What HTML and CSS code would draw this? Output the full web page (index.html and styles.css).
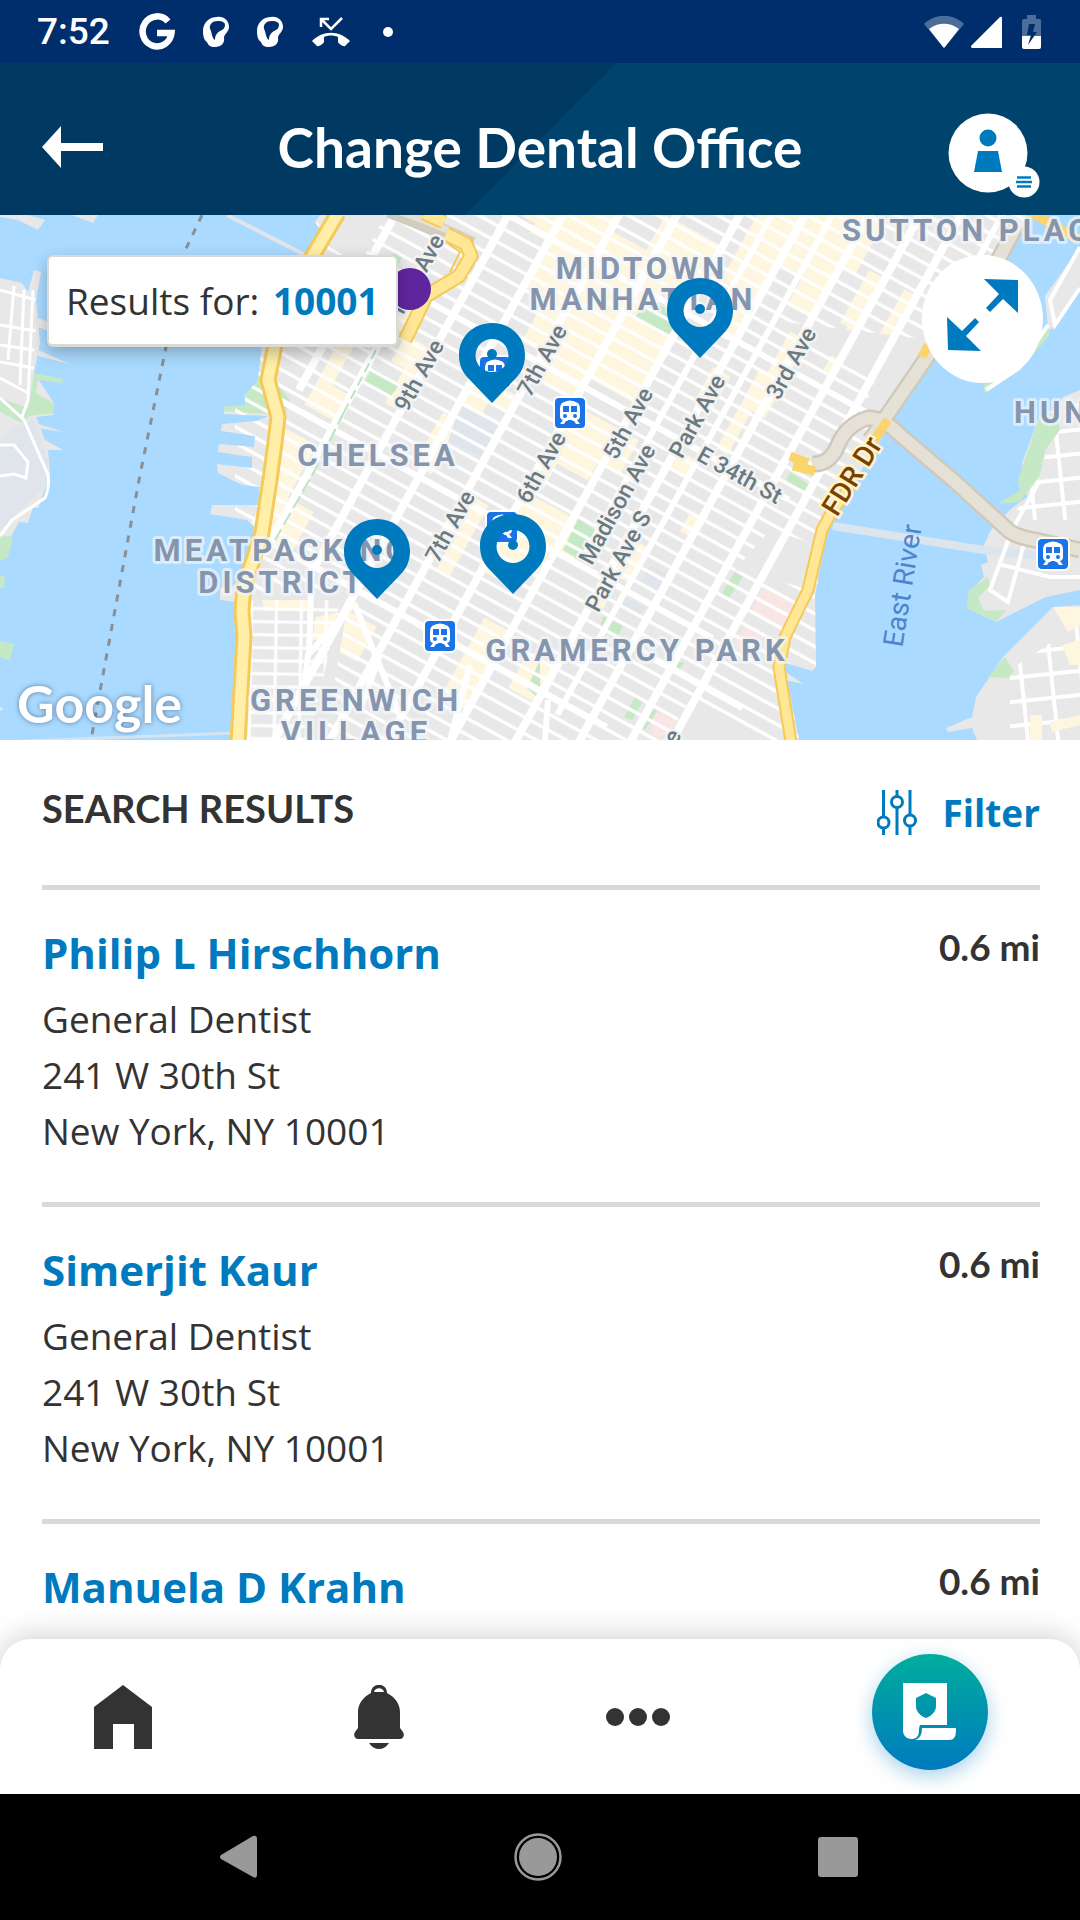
FILE: index.html
```html
<!DOCTYPE html>
<html lang="en">
<head>
<meta charset="utf-8">
<meta name="viewport" content="width=device-width, initial-scale=1">
<title>Change Dental Office</title>
<link rel="stylesheet" href="styles.css">
</head>
<body>
<div class="status">
  <span class="status-time">7:52</span>
  <div class="status-notes">
    <svg width="36" height="38" viewBox="0 0 36 38"><path d="M29 8.500A14.500 15 0 1 0 32.500 20H18" fill="none" stroke="#fff" stroke-width="6.500"/></svg>
    <svg width="26" height="32" viewBox="0 0 26 32"><path fill="#fff" fill-rule="evenodd" d="M14 1C21 0 26 5 26 11C26 16 21 18 21 22C22 27 18 31 12 31C7 31 5 29 4 26C1 24 0 20 0 15C0 7 6 1 14 1ZM8 8C6 10 7 13 8 15C9 18 9 22 12 24C12 19 14 17 17 15C20 14 22 12 22 9C22 6 19 5 15 5C11 5 9 6 8 8Z"/></svg>
    <svg width="26" height="32" viewBox="0 0 26 32"><path fill="#fff" fill-rule="evenodd" d="M14 1C21 0 26 5 26 11C26 16 21 18 21 22C22 27 18 31 12 31C7 31 5 29 4 26C1 24 0 20 0 15C0 7 6 1 14 1ZM8 8C6 10 7 13 8 15C9 18 9 22 12 24C12 19 14 17 17 15C20 14 22 12 22 9C22 6 19 5 15 5C11 5 9 6 8 8Z"/></svg>
    <svg width="40" height="32" viewBox="0 0 40 32"><path d="M10 11V3H18M10 3L20 13L31 2" fill="none" stroke="#fff" stroke-width="2.500"/><path fill="#fff" d="M1 25C12 14 28 14 39 25L34 30C32 31 28 28 27 26V21C23 19 17 19 13 21V26C12 28 8 31 6 30Z"/></svg>
    <svg width="10" height="10" viewBox="0 0 10 10"><circle cx="5" cy="5" r="5" fill="#fff"/></svg>
  </div>
  <div class="status-system">
    <svg width="40" height="34" viewBox="0 0 40 34"><path fill="#4d6d99" d="M0 9C11-2 29-2 40 9L20 33Z"/><path fill="#fff" d="M5 14C14 7 26 7 35 14L21 32Q20 33 19 32Z"/></svg>
    <svg width="32" height="34" viewBox="0 0 32 34"><path fill="#fff" d="M0 31L29 2Q31 1 31 3V33H1Q0 33 0 31Z"/></svg>
    <svg class="battery" width="20" height="34" viewBox="0 0 20 34"><path fill="#4d6d99" d="M5 0H14V4H18Q19 4 19 6V21H0V6Q0 4 2 4H5Z"/><path fill="#fff" d="M0 21H19V32Q19 34 17 34H2Q0 34 0 32Z"/><path fill="#002e6d" d="M7 9H13L11 17H15L6 30L9 20H5Z"/></svg>
  </div>
</div>

<header class="topbar">
  <button class="icon-button back" aria-label="Back"><svg width="62" height="42" viewBox="0 0 62 42"><path fill="#fff" d="M0 21L19 0V17H61V25H19V42Z"/></svg></button>
  <h1 class="title">Change Dental Office</h1>
  <button class="icon-button account" aria-label="Account menu"><svg width="92" height="86" viewBox="0 0 92 86"><circle cx="40" cy="40" r="39.500" fill="#fff"/><circle cx="76" cy="69" r="15.500" fill="#fff"/><g fill="#007abe"><circle cx="40" cy="25" r="8.500"/><path d="M30 38H50L54 59H26Z"/></g><path d="M69 64.500H83M68 69H84M69 73.500H83" stroke="#007abe" stroke-width="2.500"/></svg></button>
</header>

<section class="map" aria-label="Map of dental offices">
  <svg class="map-art" viewBox="0 215 1080 525" preserveAspectRatio="xMidYMid slice">
    <defs>
      <pattern id="streets" width="200" height="14.400" patternUnits="userSpaceOnUse" patternTransform="translate(0 59) rotate(28.800)"><path d="M0 7.200H200" stroke="#fff" stroke-width="3.200"/></pattern>
      <pattern id="queens" width="30" height="24" patternUnits="userSpaceOnUse" patternTransform="rotate(-6)"><path d="M0 12H30M15 0V24" stroke="#fff" stroke-width="4" fill="none"/></pattern>
      <pattern id="village" width="25" height="13" patternUnits="userSpaceOnUse" patternTransform="rotate(1)"><path d="M0 6H25M12 0V13" stroke="#fff" stroke-width="3" fill="none"/></pattern>
      <clipPath id="manhattan"><path id="manhattan-shape" d="M320 215L315 222L322 232L303 255L262 345L258 380L245 395V405L224 407V414L268 416L257 421L222 424L221 431L255 436L254 447L219 444L218 452L252 457V468L217 464L218 473L242 485L260 487L258 505L212 505L210 514L247 520L255 527L240 585L220 588V600L237 602L234 740H799L787 680L803 684L786 672V663L812 671L816 667L815 597L826 533L836 510L895 417L932 360L1019 237L1027 215Z"/></clipPath>
      <symbol id="train" viewBox="0 0 34 34"><rect width="34" height="34" rx="6" fill="#fff"/><rect x="2" y="2" width="30" height="30" rx="4" fill="#1a73e8"/><path fill="#fff" d="M9 7Q17 2 25 7Q27 9 27 12V20Q27 23 24 24L27 28H23L21 25H13L11 28H7L10 24Q7 23 7 20V12Q7 9 9 7Z"/><path fill="#1a73e8" d="M10 10H16V16H10ZM18 10H24V16H18Z"/><circle cx="12" cy="20" r="2" fill="#1a73e8"/><circle cx="22" cy="20" r="2" fill="#1a73e8"/><path fill="#1a73e8" d="M15 24H19L21 28H13Z"/></symbol>
    </defs>
    <rect y="215" width="1080" height="525" fill="#aadaff"/>

    <!-- New Jersey shore -->
    <g fill="#e8e8e8">
      <path d="M0 215H28L45 220L38 230L18 220L0 217ZM72 215L93 223L98 215Z"/>
      <path d="M0 278L22 283L28 292L34 270L41 272L36 300L40 343L34 373L54 403L53 415L36 417L45 440L63 450L48 450L50 475L38 508H33L28 523L19 522L12 535L0 545Z"/>
      <path d="M72 330L38 318V327L72 340ZM70 364L38 350V356ZM64 432L38 424V428ZM0 707L4 709L0 711Z"/>
    </g>
    <path fill="#dfe5ea" d="M10 430L34 418L48 460L46 485L10 520L0 530V440Z"/>
    <path fill="#c5e8c5" d="M34 373L63 379L62 383L38 380L36 393L54 403L53 413L30 416L22 423L0 412V398L28 408ZM0 535L13 537L8 557L0 561ZM0 575L5 577L4 588H0ZM0 641L14 644L10 661L0 657Z"/>
    <path d="M0 398L24 420L48 475Q50 485 45 498L12 520L0 536M0 290L36 300M0 325L36 331M0 345L34 350M0 362L34 368M0 378L30 394M14 286L8 360M24 290L20 385M33 290L28 400L22 417M0 445H14L28 462L26 478L14 474L0 476" fill="none" stroke="#fff" stroke-width="3"/>
    <path d="M202 215L184 253L166 347L139 480L91 740" fill="none" stroke="#8a8f94" stroke-width="3" stroke-dasharray="7 8"/>
    <path d="M227 215L305 255" stroke="#e1e5e9" stroke-width="4"/><path d="M0 742L235 733" stroke="#d3e4f2" stroke-width="3"/>

    <!-- Manhattan -->
    <use href="#manhattan-shape" fill="#e8e8e8"/>
    <g clip-path="url(#manhattan)">
      <g transform="translate(0 66) rotate(28.800)" fill="#fef6de">
        <path d="M560-270H640V-200H615V-150H655V-190H720V-130H690V-90H720V-10H665V15H615V-10H590V-60H565V-110H545V-170H560Z"/>
        <path d="M520-200H545V-120H530V-150H520ZM735-290H850V-230H830V-170H805V-200H780V-110H750V-160H735ZM820-160H840V-60H825V-10H812V-100H820ZM860-240H880V-130H868V-180H860ZM900-240H912V-180H900ZM770-80H790V-40H770Z"/>
        <path d="M430 35H460V70H445V120H468V150H430ZM455 10H480V40H455ZM485 40H515V110H500V70H485ZM565 40H612V60H590V80H565ZM670 20H740V60H715V80H680V110H665ZM665 120H740V160H715V190H690V210H665ZM420 180H460V240H490V290H440V220H420ZM555 90H575V150H555ZM775 10H800V30H775ZM785 110H800V150H790V190H780V150H770ZM820 60H833V80H820ZM745 260H780V300H745ZM610 150H640V230H625V190H610ZM690 250H720V340H690ZM540 310H600V350H570V380H540Z"/>
      </g>
      <path fill="#fae5e5" d="M763 588L796 606L782 628L750 613ZM745 627L763 637L745 655L735 645ZM655 711L682 723L670 733L650 740Z"/>
      <g fill="#c5e8c5"><path d="M647 302L672 310L672 336L634 318ZM578 519L595 530L580 560L563 550ZM372 368L400 384L390 397L365 382ZM248 380L268 372L290 400L285 415L223 411V404L245 402ZM394 250L403 255L398 265L390 260ZM316 599H330V608H316ZM735 571L743 577L728 599L722 593ZM603 616L623 626L618 636L600 627ZM673 659L684 663L678 672L670 667ZM635 697L643 701L632 720L624 717ZM648 705L657 711L645 730L638 724ZM540 660V700L527 688ZM790 472L811 486L806 492L786 480ZM222 551L252 556V561L222 556ZM225 618L236 620V625L226 623ZM212 699L233 702V707L212 705ZM182 719L232 722V728L181 725Z"/></g>
      <path fill="#dfe5ea" d="M420 270L450 286L440 300L415 290ZM460 405L500 425L490 460L448 442ZM650 565L672 577L657 592L640 584ZM625 597L646 608L640 615L622 606Z"/>
      <path fill="url(#streets)" d="M235 215H1030V740H235Z"/>
      <path fill="#e8e8e8" d="M240 595L350 590L325 740H235ZM770 320L930 340L910 400ZM890 345L928 358L885 415L865 405ZM690 700L770 740H665ZM770 530L818 545L813 590L735 570ZM320 215H385L360 265L318 240Z"/>
      <path fill="#fef6de" d="M262 600H310V611H265ZM316 617L340 612L322 640H312Z"/>
      <path fill="url(#village)" d="M248 600H340L310 740H244Z"/>
      <g transform="translate(0 66) rotate(28.800)" fill="none" stroke="#fff" stroke-width="8">
        <path d="M418-140V140M466-60V300M517-260V287M565-280V460M614-290V460M665-320V460M720-330V440M777-370V430M833-370V420M878-380V390M914-400V330"/>
        <path d="M748-360V150M801-370V300M950-440V-90" stroke-width="6"/>
        <path d="M400-114H950M400 0H900M400 158H900M490 287H850M860 205H960" stroke-width="6"/>
      </g>
      <path d="M354 603L308 655L303 700M354 603L400 715M312 560L309 655M380 655L360 710M470 665L450 740M548 700L545 740" fill="none" stroke="#fff" stroke-width="6"/>
      <path d="M344 412L315 470L275 540" fill="none" stroke="#bfe3c3" stroke-width="2" stroke-dasharray="14 5"/>
      <path d="M376 350L340 420" fill="none" stroke="#bfe3c3" stroke-width="2" stroke-dasharray="10 5"/>
    </g>

    <!-- Queens and the islands -->
    <g fill="#e8e8e8"><path id="queens-north" d="M1080 390L1063 397L1056 410L1041 412L1022 463L1027 497L1012 508L991 530L984 545L988 562L981 565L984 577L969 592L967 608L996 622L1046 597L1080 590Z"/><path id="queens-south" d="M1080 605L1053 607L1003 657L976 697L972 717L946 728L948 732L972 728L977 740H1080Z"/><path d="M1080 247L1045 296L1048 330L1053 328L1080 290Z"/></g>
    <path fill="url(#queens)" d="M1055 420L1080 395V520H1010L1040 475ZM1010 670L1055 640L1080 610V740H1010Z"/>
    <path fill="#fef6de" d="M1053 607H1080V625L1068 632ZM1062 645L1080 640V665H1070ZM1030 715H1042V740H1030ZM1050 722L1080 715V725L1052 732Z"/>
    <g fill="#c5e8c5"><path d="M1047 325L1050 335L1019 371L984 393V385ZM1041 412L1056 414L1060 430L1045 450L1040 475L1020 502L998 504L1020 490L1018 480ZM988 577L990 585L978 598L984 611L1006 610L996 622L967 608L969 590ZM1005 657L1014 671L1008 678L988 677Z"/></g>
    <path d="M1080 247L1050 300L1055 325L1080 288M1048 325L1019 368L986 390" fill="none" stroke="#fff" stroke-width="4"/>
    <path d="M833 526L990 551L1040 556" fill="none" stroke="#dbe5ee" stroke-width="8"/>
    <path d="M1040 480L1012 530L990 590L1008 602L1025 540M998 564L1050 577H1080" fill="none" stroke="#fff" stroke-width="4"/>

    <!-- Expressways -->
    <g fill="none" stroke-linejoin="round">
      <path d="M1017 225L990 275L932 350L870 440M812 464Q830 465 838 445T868 418Q884 418 900 435L953 480L1008 530Q1015 537 1040 541L1080 550" stroke="#cfc9bb" stroke-width="17"/>
      <path d="M1017 225L990 275L932 350L870 440M812 464Q830 465 838 445T868 418Q884 418 900 435L953 480L1008 530Q1015 537 1040 541L1080 550" stroke="#e5e1d6" stroke-width="12"/>
      <path d="M389 210Q430 225 472 245" stroke="#d1ccbe" stroke-width="16"/>
      <path d="M389 208Q430 221 468 240" stroke="#e5e1d6" stroke-width="7"/>
      <path d="M424 213L444 222M446 234L466 244L471 256L459 276L426 296Q415 320 405 340" stroke="#f5ca5b" stroke-width="15"/>
      <path d="M424 213L444 222M446 234L466 244L471 256L459 276L426 296Q415 320 405 340" stroke="#ffe796" stroke-width="11"/>
      <path d="M446 242L460 252L450 272" stroke="#f5ca5b" stroke-width="2"/>
      <path d="M338 213L312 257L275 345L268 380L278 417L275 443L270 480L262 533L244 587L242 610L244 637L238 742" stroke="#f5ca5b" stroke-width="17"/>
      <path d="M338 213L312 257L275 345L268 380L278 417L275 443L270 480L262 533L244 587L242 610L244 637L238 742" stroke="#ffefa8" stroke-width="11"/>
      <path d="M850 487L831 513L822 530L808 590L785 637L779 667L791 742" stroke="#f5ca5b" stroke-width="13"/>
      <path d="M850 487L831 513L822 530L808 590L785 637L779 667L791 742" stroke="#ffe796" stroke-width="9"/>
      <path d="M888 420L874 440M928 345L922 357M790 456L808 463M793 466L815 471M1030 212L1080 240" stroke="#fbd46b" stroke-width="9"/>
    </g>

    <g class="road-label">
      <text transform="translate(445 240) rotate(-61)" text-anchor="end">10th Ave</text>
      <text transform="translate(426 379) rotate(-61)">9th Ave</text>
      <text transform="translate(549 364) rotate(-61)">7th Ave</text>
      <text transform="translate(457 530) rotate(-61)">7th Ave</text>
      <text transform="translate(548 471) rotate(-61)">6th Ave</text>
      <text transform="translate(635 427) rotate(-61)">5th Ave</text>
      <text transform="translate(704 420) rotate(-61)">Park Ave</text>
      <text transform="translate(798 367) rotate(-61)">3rd Ave</text>
      <text transform="translate(624 508) rotate(-61)">Madison Ave</text>
      <text transform="translate(625 565) rotate(-61)">Park Ave S</text>
      <text transform="translate(736 482) rotate(29)">E 34th St</text>
      <text transform="translate(682 735) rotate(-61)" text-anchor="end">1st Ave</text>
    </g>
    <text class="highway-label" transform="translate(860 481) rotate(-58)">FDR Dr</text>
    <text class="water-label" transform="translate(912 587) rotate(-81)">East River</text>

    <use href="#train" x="553" y="396" width="34" height="34"/>
    <use href="#train" x="423" y="619" width="34" height="34"/>
    <use href="#train" x="1036" y="537" width="34" height="34"/>
    <use href="#train" x="485" y="510" width="34" height="34"/>
    <use href="#train" x="478" y="355" width="34" height="34"/>

    <g class="area-label">
      <text x="842" y="241">SUTTON PLACE</text>
      <text x="642" y="279" text-anchor="middle">MIDTOWN</text>
      <text x="643" y="310" text-anchor="middle">MANHATTAN</text>
      <text x="1014" y="423">HUNTERS POINT</text>
      <text x="378" y="466" text-anchor="middle">CHELSEA</text>
      <text x="282" y="561" text-anchor="middle">MEATPACKING</text>
      <text x="282" y="593" text-anchor="middle">DISTRICT</text>
      <text x="637" y="661" text-anchor="middle">GRAMERCY PARK</text>
      <text x="356" y="711" text-anchor="middle">GREENWICH</text>
      <text x="356" y="743" text-anchor="middle">VILLAGE</text>
    </g>
    <circle cx="410" cy="289" r="21" fill="#5f259f"/>
  </svg>

  <button class="pin pin-midtown-south" aria-label="Dental office near 7th Ave"><svg viewBox="0 0 66 80"><path fill="#007abe" fill-rule="evenodd" d="M33 0C14 0 0 14 0 32C0 43 4 50 10 56L33 80L56 56C62 50 66 43 66 32C66 14 52 0 33 0ZM33 16A16.500 16.500 0 1 1 33 49A16.500 16.500 0 1 1 33 16Z"/><circle cx="33" cy="31" r="5" fill="#007abe"/></svg></button>
  <button class="pin pin-midtown" aria-label="Dental office in Midtown"><svg viewBox="0 0 66 80"><path fill="#007abe" fill-rule="evenodd" d="M33 0C14 0 0 14 0 32C0 43 4 50 10 56L33 80L56 56C62 50 66 43 66 32C66 14 52 0 33 0ZM33 16A16.500 16.500 0 1 1 33 49A16.500 16.500 0 1 1 33 16Z"/><circle cx="33" cy="31" r="5" fill="#007abe"/></svg></button>
  <button class="pin pin-meatpacking" aria-label="Dental office in the Meatpacking District"><svg viewBox="0 0 66 80"><path fill="#007abe" fill-rule="evenodd" d="M33 0C14 0 0 14 0 32C0 43 4 50 10 56L33 80L56 56C62 50 66 43 66 32C66 14 52 0 33 0ZM33 16A16.500 16.500 0 1 1 33 49A16.500 16.500 0 1 1 33 16Z"/><circle cx="33" cy="31" r="5" fill="#007abe"/></svg></button>
  <button class="pin pin-flatiron" aria-label="Dental office near 6th Ave"><svg viewBox="0 0 66 80"><path fill="#007abe" fill-rule="evenodd" d="M33 0C14 0 0 14 0 32C0 43 4 50 10 56L33 80L56 56C62 50 66 43 66 32C66 14 52 0 33 0ZM33 16A16.500 16.500 0 1 1 33 49A16.500 16.500 0 1 1 33 16Z"/><circle cx="33" cy="31" r="5" fill="#007abe"/></svg></button>

  <p class="results-for">Results for: <a class="zip" href="#search">10001</a></p>
  <button class="expand" aria-label="Expand map"><svg width="72" height="74" viewBox="0 0 72 74"><g fill="#007abe"><path d="M37 1L71 2V35L56 21L43 34L39 30L52 16ZM0 39L15 53L28 40L32 44L19 58L34 73L1 72Z"/></g></svg></button>
  <span class="google">Google</span>
</section>

<main class="results">
  <div class="results-head">
    <h2 class="results-title">SEARCH RESULTS</h2>
    <button class="filter"><svg width="40" height="46" viewBox="0 0 40 46"><g fill="none" stroke="#007abe" stroke-width="3"><path d="M6.500 0V27M6.500 38V45M20 0V6M20 18V45M33 0V25M33 36V45"/><circle cx="6.500" cy="32.500" r="5.500"/><circle cx="20" cy="12" r="5.500"/><circle cx="33" cy="30.500" r="5.500"/></g></svg>Filter</button>
  </div>
  <ul class="office-list">
    <li class="office">
      <div class="office-info"><a class="office-name" href="#philip">Philip L Hirschhorn</a><p>General Dentist</p><p>241 W 30th St</p><p>New York, NY 10001</p></div>
      <span class="distance">0.6 mi</span>
    </li>
    <li class="office">
      <div class="office-info"><a class="office-name" href="#simerjit">Simerjit Kaur</a><p>General Dentist</p><p>241 W 30th St</p><p>New York, NY 10001</p></div>
      <span class="distance">0.6 mi</span>
    </li>
    <li class="office">
      <div class="office-info"><a class="office-name" href="#manuela">Manuela D Krahn</a></div>
      <span class="distance">0.6 mi</span>
    </li>
  </ul>
</main>

<nav class="tabs" aria-label="Main">
  <button class="icon-button" aria-label="Home"><svg width="58" height="64" viewBox="0 0 58 64"><path fill="#333" d="M29 0L58 22V64H40V39H19V64H0V22Z"/></svg></button>
  <button class="icon-button" aria-label="Notifications"><svg width="50" height="64" viewBox="0 0 50 64"><g fill="#333"><path fill-rule="evenodd" d="M17 8C17-3 33-3 33 8C41 12 46 19 46 27V43L49 47C51 51 49 54 46 54H4C1 54-1 51 1 47L4 43V27C4 19 9 12 17 8ZM20 7H30C29 2 21 2 20 7Z"/><path d="M15 58H35Q31 64 25 64T15 58Z"/></g></svg></button>
  <button class="icon-button" aria-label="More"><svg width="64" height="18" viewBox="0 0 64 18"><g fill="#333"><circle cx="9" cy="9" r="9"/><circle cx="32" cy="9" r="9"/><circle cx="55" cy="9" r="9"/></g></svg></button>
  <button class="icon-button member-card" aria-label="ID card"><svg width="54" height="58" viewBox="0 0 54 58"><path fill="#fff" fill-rule="evenodd" d="M0 0H44V42H17C15 47 17 51 14 54C8 59 0 54 0 48ZM23 10L13 15V23C13 29 18 33 23 35C28 33 33 29 33 23V15Z"/><path fill="#fff" d="M19 45H53V48Q53 57 46 57H12Q19 55 19 45Z"/></svg></button>
</nav>

<div class="system-nav">
  <button class="icon-button" aria-label="System back"><svg width="38" height="44" viewBox="0 0 38 44"><path fill="#999" d="M1 20L33 1Q37 0 37 4V40Q37 44 33 42L1 24Q-1 22 1 20Z"/></svg></button>
  <button class="icon-button" aria-label="System home"><svg width="48" height="48" viewBox="0 0 48 48"><circle cx="24" cy="24" r="19" fill="#999"/><circle cx="24" cy="24" r="22.500" fill="none" stroke="#999" stroke-width="2.500"/></svg></button>
  <button class="icon-button" aria-label="Recent apps"><svg width="40" height="40" viewBox="0 0 40 40"><rect width="40" height="40" rx="3" fill="#999"/></svg></button>
</div>
</body>
</html>
```
FILE: styles.css
```css
* { box-sizing: border-box; }

body {
  margin: 0;
  height: 100vh;
  display: flex;
  flex-direction: column;
  background: #fff;
  color: #333;
  font-family: "Open Sans", "Noto Sans", sans-serif;
  font-size: 37px;
}

h1, h2, p, ul { margin: 0; padding: 0; }
a { color: #007abe; text-decoration: none; }
svg { display: block; flex: none; }
button { padding: 0; border: 0; background: none; color: inherit; font: inherit; cursor: pointer; }

.status {
  flex: none;
  height: 63px;
  padding: 0 38px 0 37px;
  display: flex;
  align-items: center;
  background: #002e6d;
  color: #fff;
}
.status-time { font: 500 37px/64px Roboto, sans-serif; }
.status-notes { display: flex; align-items: center; gap: 28px; margin-left: 29px; }
.status-notes svg:last-child { margin-left: 4px; }
.status-system { display: flex; align-items: center; gap: 7px; margin-left: auto; }
.battery { margin-left: 12px; }

.topbar {
  flex: none;
  height: 152px;
  padding: 16px 40px 0;
  display: grid;
  grid-template-columns: 1fr auto 1fr;
  align-items: center;
  background: linear-gradient(135deg, #003a63 50%, #00446d 50%);
  color: #fff;
}
.title { font: 700 55px/64px Lato, sans-serif; }
.account { justify-self: end; margin-top: 18px; }
.back { justify-self: start; margin-left: 2px; }

.map { position: relative; flex: none; height: 525px; overflow: hidden; background: #aadaff; }
.map-art { width: 100%; height: 100%; }
.area-label {
  fill: #8595ae;
  stroke: #f4f6f8;
  stroke-opacity: .7;
  stroke-width: 6px;
  stroke-linejoin: round;
  paint-order: stroke;
  font: 700 31px Roboto, sans-serif;
  letter-spacing: 4px;
}
.road-label, .highway-label, .water-label { text-anchor: middle; font-family: Roboto, sans-serif; }
.road-label { fill: #6b7a80; stroke: #f2f2f2; stroke-width: 5px; stroke-linejoin: round; paint-order: stroke; font-size: 23px; font-weight: 500; }
.highway-label { fill: #7a4100; stroke: #fff3c9; stroke-width: 5px; paint-order: stroke; font-size: 28px; font-weight: 500; }
.water-label { fill: #4f83cc; font-size: 28px; }

.pin { position: absolute; width: 66px; height: 80px; margin-left: -33px; }
.pin-midtown-south { left: 45.6%; top: 108px; }
.pin-midtown { left: 64.8%; top: 63px; }
.pin-meatpacking { left: 34.9%; top: 304px; }
.pin-flatiron { left: 47.5%; top: 299px; }

.results-for {
  position: absolute;
  left: 47px;
  top: 40px;
  padding: 18px 17px;
  border: 2px solid #d9d9d6;
  border-bottom-width: 3px;
  border-radius: 6px;
  background: #fff;
  box-shadow: 0 6px 16px rgba(0, 0, 0, .25);
  line-height: 51px;
  white-space: nowrap;
}
.zip { margin-left: 4px; font-weight: 700; }
.expand {
  position: absolute;
  right: 37px;
  top: 40px;
  width: 121px;
  height: 128px;
  padding-bottom: 8px;
  display: flex;
  align-items: center;
  justify-content: center;
  border-radius: 50%;
  background: #fff;
}
.google {
  position: absolute;
  left: 17px;
  bottom: 5px;
  color: #fff;
  font: 700 52px/64px Lato, sans-serif;
  text-shadow: 0 0 5px rgba(60, 80, 110, .7);
}

.results { flex: 1; min-height: 0; overflow: hidden; padding: 0 40px 0 42px; }
.results-head { height: 145px; display: flex; justify-content: space-between; align-items: center; }
.results-title { padding-bottom: 10px; font: 700 38px/48px Lato, sans-serif; }
.filter { display: flex; align-items: center; gap: 25px; color: #007abe; font-weight: 700; }

.office-list { list-style: none; }
.office {
  height: 317px;
  padding-top: 33px;
  display: flex;
  justify-content: space-between;
  border-top: 5px solid #d9d9d6;
  line-height: 56px;
}
.office-name { display: block; margin-bottom: 8px; font-size: 42px; font-weight: 700; line-height: 60px; }
.distance { font: 700 37px/48px Lato, sans-serif; }

.tabs {
  position: relative;
  flex: none;
  height: 155px;
  margin-top: -31px;
  padding: 0 92px 0 94px;
  display: flex;
  justify-content: space-between;
  align-items: center;
  border-radius: 31px 31px 0 0;
  background: #fff;
  box-shadow: 0 -2px 30px rgba(0, 0, 0, .2);
}
.member-card {
  width: 116px;
  height: 116px;
  margin-bottom: 10px;
  display: flex;
  align-items: center;
  justify-content: center;
  border-radius: 50%;
  background: linear-gradient(#00ad9e, #007abe);
  box-shadow: 0 6px 20px rgba(0, 122, 190, .35);
}

.system-nav {
  position: relative;
  flex: none;
  height: 126px;
  padding: 0 222px 0 220px;
  display: flex;
  justify-content: space-between;
  align-items: center;
  background: #000;
}
```
